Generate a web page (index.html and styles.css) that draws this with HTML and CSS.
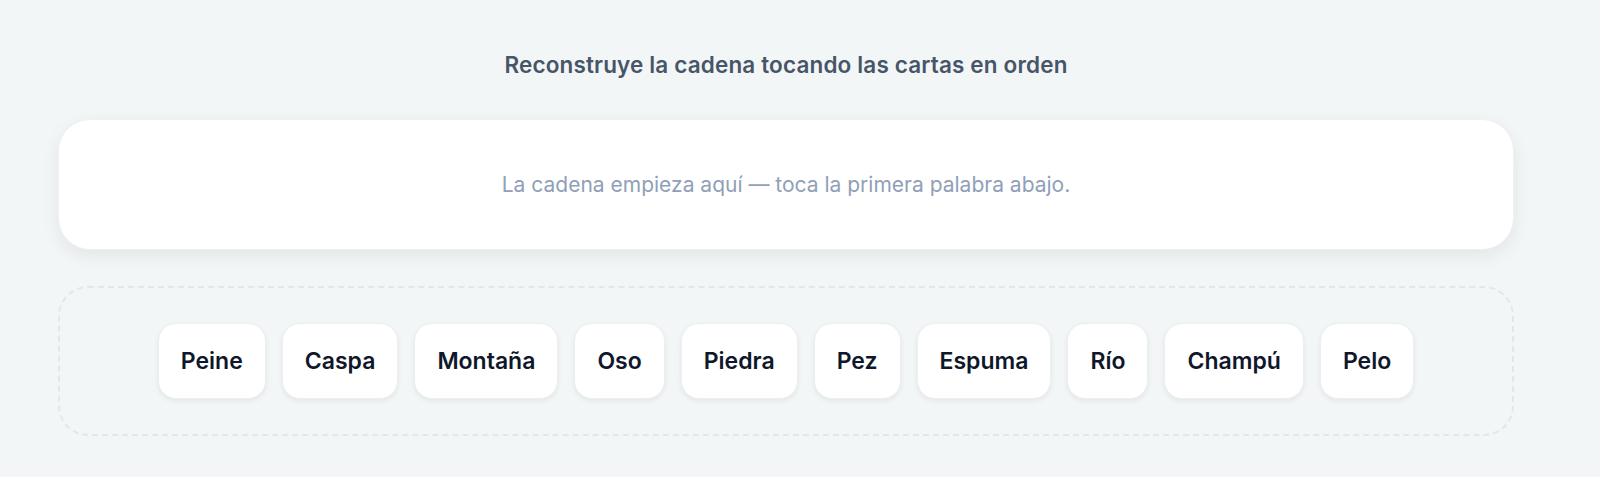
FILE: index.html
```html
<!DOCTYPE html>
<html lang="es">
<head>
    <meta charset="UTF-8">
    <meta name="viewport" content="width=device-width, initial-scale=1.0">
    <title>Cadena de palabras</title>
    <link rel="stylesheet" href="styles.css">
</head>
<body>
    <main class="game">
        <h1 class="prompt">Reconstruye la cadena tocando las cartas en orden</h1>

        <!-- the chain built so far -->
        <section class="chain">
            <p class="chain-hint">La cadena empieza aquí — toca la primera palabra abajo.</p>
        </section>

        <!-- cards still to place -->
        <section class="tray">
            <button class="card">Peine</button>
            <button class="card">Caspa</button>
            <button class="card">Montaña</button>
            <button class="card">Oso</button>
            <button class="card">Piedra</button>
            <button class="card">Pez</button>
            <button class="card">Espuma</button>
            <button class="card">Río</button>
            <button class="card">Champú</button>
            <button class="card">Pelo</button>
        </section>
    </main>
</body>
</html>
```

FILE: styles.css
```css
body {
    margin: 0;
    padding: 51px 86px 40px 58px;
    font-family: Inter, "Noto Sans", sans-serif;
    background-color: #f3f6f6;
    color: #0f172a;
}

.game {
    display: flex;
    flex-direction: column;
}

.prompt {
    margin: 0 0 40px;
    font-size: 22.5px;
    line-height: 28px;
    font-weight: 600;
    letter-spacing: 0.15px;
    text-align: center;
    color: #475569;
}

.chain {
    background-color: #ffffff;
    border: 1px solid #eef1f2;
    border-radius: 32px;
    padding: 50px 24px;
    box-shadow: 0 6px 18px rgba(15, 23, 42, 0.07);
    text-align: center;
}

.chain-hint {
    margin: 0;
    font-size: 21px;
    line-height: 29px;
    color: #8fa0b8;
}

.tray {
    margin-top: 36px;
    padding: 35px 24px;
    border: 2px dashed #e2e8ea;
    border-radius: 30px;
    display: flex;
    justify-content: center;
    gap: 16px;
}

.card {
    height: 76px;
    padding: 0 22px;
    font-family: inherit;
    font-size: 23px;
    font-weight: 600;
    color: #0f172a;
    background-color: #ffffff;
    border: 1px solid #eceff1;
    border-radius: 18px;
    box-shadow: 0 2px 5px rgba(15, 23, 42, 0.07);
    cursor: pointer;
}

.card:hover {
    background-color: #f8fafc;
}
```
